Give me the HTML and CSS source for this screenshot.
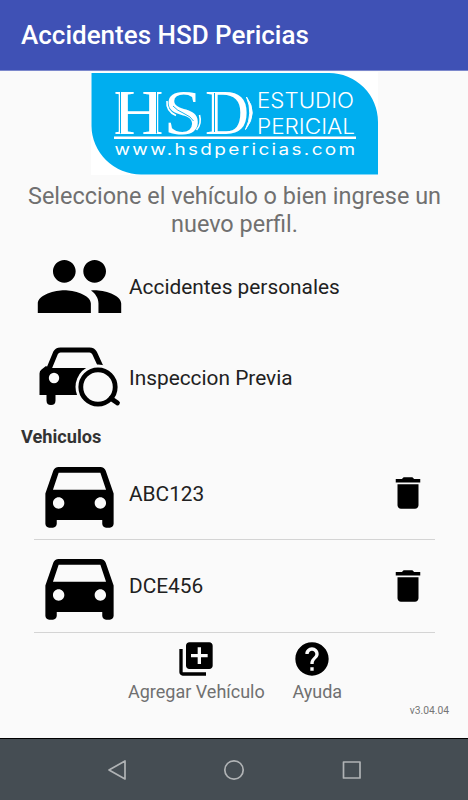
FILE: index.html
```
<!DOCTYPE html>
<html lang="es">
<head>
    <meta charset="UTF-8">
    <meta name="viewport" content="width=device-width, initial-scale=1.0">
    <title>Accidentes HSD Pericias</title>
    <link rel="stylesheet" href="styles.css">
</head>
<body>
    <svg class="sprite" width="0" height="0">
        <symbol id="car" viewBox="0 0 24 24">
            <path d="M18.92 6.01C18.72 5.42 18.16 5 17.5 5h-11c-.66 0-1.21.42-1.42 1.01L3 12v8c0 .55.45 1 1 1h1c.55 0 1-.45 1-1v-1h12v1c0 .55.45 1 1 1h1c.55 0 1-.45 1-1v-8l-2.08-5.99zM6.5 16c-.83 0-1.5-.67-1.5-1.5S5.67 13 6.5 13s1.5.67 1.5 1.5S7.33 16 6.5 16zm11 0c-.83 0-1.5-.67-1.5-1.5s.67-1.5 1.5-1.5 1.5.67 1.5 1.5-.67 1.5-1.5 1.5zM5 11l1.5-4.5h11L19 11H5z"/>
        </symbol>
        <symbol id="trash" viewBox="0 0 24 24">
            <path d="M6 19c0 1.1.9 2 2 2h8c1.1 0 2-.9 2-2V7H6v12zM19 4h-3.5l-1-1h-5l-1 1H5v2h14V4z"/>
        </symbol>
    </svg>

    <header class="app-bar">
        <h1 class="title">Accidentes HSD Pericias</h1>
    </header>

    <main class="content">
        <svg class="logo" viewBox="0 0 287 103">
            <rect width="287" height="103" fill="#fff"/>
            <path d="M.5 1H238A49 49 0 0 1 287 50V102.5H50A49.5 49 0 0 1 .5 54Z" fill="#00aeef"/>
            <g class="logo-letters">
                <text x="22.5" y="61.5" textLength="50" lengthAdjust="spacingAndGlyphs">H</text>
                <text x="73" y="61.5" textLength="38" lengthAdjust="spacingAndGlyphs">S</text>
                <text x="114" y="61.5" textLength="44" lengthAdjust="spacingAndGlyphs">D</text>
            </g>
            <!-- engraved lines inside the letters -->
            <g fill="none">
                <path d="M30.5 21V60M64.5 21V60" stroke="#fff" stroke-width="5.5"/>
                <path d="M29.5 20V61.5M65.5 20V61.5M123.5 21V60" stroke="#00aeef"/>
                <path d="M76 29Q75 39 85 43.5M108.500 43Q111 52 105.500 58" stroke="#fff" stroke-width="1.6"/>
                <path d="M82 34Q86 38.500 93 41.500T102.500 49" stroke="#00aeef" stroke-width=".9"/>
                <path d="M155.5 25Q167.5 41 154.5 57.5Q162.5 41 155.5 25Z" fill="#fff" stroke="#fff"/>
            </g>
            <g class="logo-name">
                <text x="166" y="36" textLength="97" lengthAdjust="spacingAndGlyphs">ESTUDIO</text>
                <text x="166" y="61.5" textLength="98" lengthAdjust="spacingAndGlyphs">PERICIAL</text>
            </g>
            <rect x="23" y="64.5" width="242" height="2.5" fill="#fff"/>
            <text class="logo-url" x="23.5" y="83" textLength="243" lengthAdjust="spacingAndGlyphs">www.hsdpericias.com</text>
        </svg>

        <p class="intro">Seleccione el vehículo o bien ingrese un nuevo perfil.</p>

        <div class="row">
            <svg class="row-icon" viewBox="0 0 24 24">
                <path d="M16 11c1.66 0 2.99-1.34 2.99-3S17.66 5 16 5s-3 1.34-3 3 1.34 3 3 3zm-8 0c1.66 0 2.99-1.34 2.99-3S9.66 5 8 5 5 6.34 5 8s1.34 3 3 3zm0 2c-2.33 0-7 1.17-7 3.5V19h14v-2.5c0-2.33-4.67-3.5-7-3.5zm8 0c-.29 0-.62.02-.97.05 1.16.84 1.97 1.97 1.97 3.45V19h6v-2.5c0-2.33-4.67-3.5-7-3.5z"/>
            </svg>
            <span class="row-label">Accidentes personales</span>
        </div>
        <div class="row">
            <svg class="row-icon" viewBox="0 0 91 91">
                <path d="M15 36H60V63H21.5V68.5Q21.5 73 17 73Q12.5 73 12.5 68.5V63H5.5V41.5Q5.5 39 7.5 37.5L12 34Z"/>
                <path d="M16 35 23 20H58L64 35Z" fill="#fafafa"/>
                <path d="M14.5 38 21.5 21Q23 18 26.5 18H55.5Q59 18 60.5 21L67 35" fill="none" stroke="#000" stroke-width="5.2"/>
                <circle cx="20" cy="46" r="5.2" fill="#fafafa"/>
                <circle cx="64" cy="55" r="22.5" fill="#fafafa"/>
                <circle cx="64" cy="55" r="17.2" fill="none" stroke="#000" stroke-width="4.8"/>
                <path d="M77 66.5 83.5 71" stroke="#000" stroke-width="4.8" stroke-linecap="round"/>
            </svg>
            <span class="row-label">Inspeccion Previa</span>
        </div>

        <h2 class="section">Vehiculos</h2>

        <div class="row vehicle">
            <svg class="row-icon"><use href="#car"/></svg>
            <span class="row-label">ABC123</span>
            <svg class="delete"><use href="#trash"/></svg>
        </div>
        <div class="row vehicle">
            <svg class="row-icon"><use href="#car"/></svg>
            <span class="row-label">DCE456</span>
            <svg class="delete"><use href="#trash"/></svg>
        </div>

        <div class="actions">
            <div class="action">
                <svg class="action-icon" viewBox="0 0 24 24">
                    <path d="M4 6H2v14c0 1.1.9 2 2 2h14v-2H4V6zm16-4H8c-1.1 0-2 .9-2 2v12c0 1.1.9 2 2 2h12c1.1 0 2-.9 2-2V4c0-1.1-.9-2-2-2zm-1 9h-4v4h-2v-4H9V9h4V5h2v4h4v2z"/>
                </svg>
                <span>Agregar Vehículo</span>
            </div>
            <div class="action">
                <svg class="action-icon help" viewBox="0 0 24 24">
                    <path d="M12 2C6.48 2 2 6.48 2 12s4.48 10 10 10 10-4.48 10-10S17.52 2 12 2zm1 17h-2v-2h2v2zm2.07-7.75l-.9.92C13.45 12.9 13 13.5 13 15h-2v-.5c0-1.1.45-2.1 1.17-2.83l1.24-1.26c.37-.36.59-.86.59-1.41 0-1.1-.9-2-2-2s-2 .9-2 2H8c0-2.21 1.79-4 4-4s4 1.79 4 4c0 .88-.36 1.68-.93 2.25z"/>
                </svg>
                <span>Ayuda</span>
            </div>
        </div>
        <div class="version">v3.04.04</div>
    </main>

    <nav class="nav-bar">
        <svg class="nav-icon" viewBox="0 0 24 24"><path d="M20 3V21L4 12Z"/></svg>
        <svg class="nav-icon" viewBox="0 0 24 24"><circle cx="12" cy="12" r="9.2"/></svg>
        <svg class="nav-icon" viewBox="0 0 24 24"><rect x="4.5" y="4" width="16.5" height="16"/></svg>
    </nav>
</body>
</html>
```
FILE: styles.css
```
* {
    box-sizing: border-box;
}
body {
    margin: 0;
    height: 800px;
    display: flex;
    flex-direction: column;
    overflow: hidden;
    background-color: #fafafa;
    font-family: Roboto, sans-serif;
    color: #212121;
}
.sprite {
    display: none;
}
.app-bar {
    height: 71px;
    padding-left: 21px;
    display: flex;
    align-items: center;
    background-color: #3f51b5;
    border-bottom: 1px solid #7c88cc;
}
.title {
    margin: 0;
    font-size: 26px;
    font-weight: 500;
    color: #fff;
}
.content {
    flex: 1;
    display: flex;
    flex-direction: column;
}
.logo {
    width: 287px;
    height: 103px;
    margin: 1px 0 0 91px;
}
.logo-letters {
    font-family: "Liberation Serif", serif;
    font-size: 64px;
    fill: #fff;
}
.logo-name {
    font-family: Inter, "Liberation Sans", sans-serif;
    font-size: 21px;
    font-weight: 300;
    fill: #fff;
}
.logo-url {
    font-family: Inter, "Liberation Sans", sans-serif;
    font-size: 16px;
    letter-spacing: 2px;
    fill: #fff;
}
.intro {
    margin: 7px 20px 0 21px;
    height: 59px;
    font-size: 23.45px;
    line-height: 28px;
    text-align: center;
    color: #707070;
}
.row {
    height: 91px;
    margin: 0 33px 0 34px;
    display: flex;
    align-items: center;
}
.row-icon {
    width: 91px;
    height: 91px;
    margin-right: 4px;
}
.row-label {
    flex: 1;
    font-size: 20.85px;
}
.section {
    margin: 0 0 0 21px;
    height: 24.5px;
    font-size: 18.2px;
    line-height: 27px;
    font-weight: 700;
    color: #333;
}
.vehicle {
    height: 92.5px;
    border-bottom: 1px solid #d4d4d4;
}
.vehicle .row-label {
    padding-top: 1px;
}
.delete {
    width: 42px;
    height: 42px;
    margin-right: 6px;
}
.actions {
    display: flex;
    gap: 27px;
    margin: 6px 0 0 128px;
}
.action {
    display: flex;
    flex-direction: column;
    align-items: center;
    font-size: 18px;
    line-height: 24px;
    color: #707070;
}
.action-icon {
    width: 40px;
    height: 40px;
    margin-bottom: 1px;
    fill: #000;
}
.help {
    margin-right: 11px;
}
.version {
    margin-right: 19px;
    font-size: 10.3px;
    line-height: 14px;
    text-align: right;
    color: #757575;
}
.nav-bar {
    height: 62px;
    display: flex;
    justify-content: center;
    align-items: center;
    gap: 93px;
    background-color: #454d53;
    border-top: 1px solid #000;
}
.nav-icon {
    width: 24px;
    height: 24px;
    fill: none;
    stroke: #b0b3b5;
    stroke-width: 1.7;
    stroke-linejoin: round;
}
```
